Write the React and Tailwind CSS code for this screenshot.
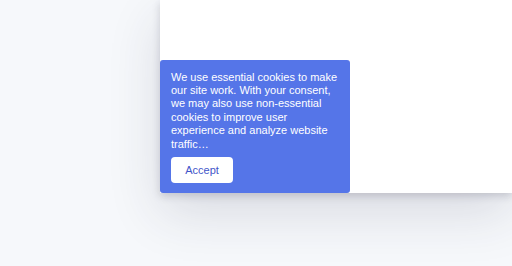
export default function App() {
    return <div className="w-[512px] h-[266px] overflow-hidden bg-[#f6f8fb] flex" style={{ fontFamily: '"Liberation Sans", Arial, sans-serif' }}>
        <div className="w-[160px] shrink-0"></div>
        <div className="flex-1 h-[193px] bg-white shadow-[0_3px_8px_rgba(40,40,60,0.18),0_20px_50px_rgba(40,45,70,0.14)] flex flex-col justify-end items-start">
            <div className="w-[190px] bg-[#5575e8] rounded-[3px] px-[11px] pt-[11px] pb-[10px]">
                <p className="text-white text-[11px] leading-[13.4px]">
                    We use essential cookies to make our site work. With your consent, we may also use non-essential cookies to improve user experience and analyze website traffic…
                </p>
                <button className="mt-[6px] w-[62px] h-[26px] bg-white rounded-[4px] text-[11px] text-[#3f55c9]">
                    Accept
                </button>
            </div>
        </div>
    </div>
}
